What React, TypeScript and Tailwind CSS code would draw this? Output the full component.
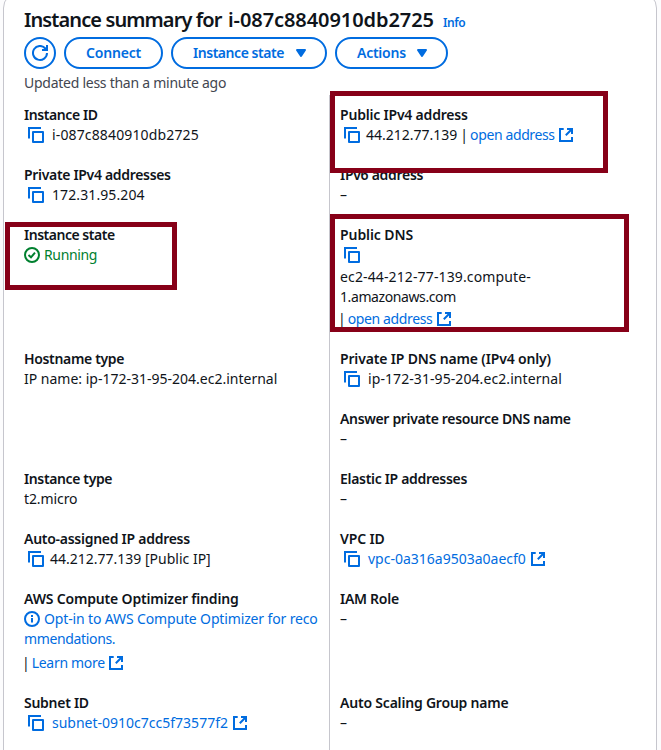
import type { ReactNode } from 'react';

function CopyIcon() {
  return (
    <svg className="ml-1 size-4 shrink-0" viewBox="0 0 16 16" fill="none" stroke="#006ce0" strokeWidth="2">
      <path d="M1 11.5V1h12" />
      <path d="M5 5h10v10H5z" strokeLinejoin="round" />
    </svg>
  );
}

function ExternalIcon({ className = 'ml-1' }: { className?: string }) {
  return (
    <svg className={`size-4 shrink-0 ${className}`} viewBox="0 0 16 16" fill="none" stroke="#006ce0" strokeWidth="2">
      <path d="M5.7 2H2v12h12v-4" />
      <path d="M9 2h5v5M14 2L7.8 8.2" />
    </svg>
  );
}

function CheckIcon() {
  return (
    <svg className="size-4 shrink-0" viewBox="0 0 16 16" fill="none" stroke="#00802f" strokeWidth="2">
      <circle cx="8" cy="8" r="7" />
      <path d="M4.5 8L7 10.3l4-4.6" />
    </svg>
  );
}

function InfoIcon() {
  return (
    <svg className="size-4 shrink-0" viewBox="0 0 16 16" fill="none" stroke="#006ce0" strokeWidth="2">
      <circle cx="8" cy="8" r="7" />
      <path d="M8 11.5V7M8 6V4" />
    </svg>
  );
}

function Caret() {
  return (
    <svg className="size-4 shrink-0" viewBox="0 0 16 16" fill="#006ce0" stroke="#006ce0" strokeWidth="2" strokeLinejoin="round">
      <path d="M4 5h8l-4 6z" />
    </svg>
  );
}

function Field({ label, labelClass = '', children }: { label: string; labelClass?: string; children: ReactNode }) {
  return (
    <div className="py-[10px]">
      <div className={`h-5 w-fit font-semibold ${labelClass}`}>{label}</div>
      {children}
    </div>
  );
}

const row = 'flex h-5 items-center';
const link = 'text-[#006ce0]';

export default function App() {
  return (
    <div className="h-[750px] w-[661px] overflow-hidden bg-[#fcfcfd] font-['Noto_Sans',sans-serif] text-[14px] leading-5 whitespace-nowrap text-[#0f141a]">
      <div className="relative -mt-2 ml-[3px] h-[780px] w-[654px] rounded-2xl border border-[#c6c6cd] bg-white pt-[15px]">
        <header className="pl-5">
          <div className="flex h-6 items-baseline">
            <h1 className="w-[411px] text-[20px] leading-6 font-semibold">
              <span className="inline-block w-[204px] tracking-[-0.9px]">Instance summary for</span>
              <span className="tracking-[-0.07px]">i-087c8840910db2725</span>
            </h1>
            <a className="ml-2 text-[12px] font-semibold tracking-[-0.4px] text-[#006ce0]">Info</a>
          </div>
          <div className="mt-[5px] flex gap-2 font-semibold text-[#006ce0]">
            <button className="flex size-8 items-center justify-center rounded-full border-2 border-[#006ce0]">
              <svg className="size-4" viewBox="0 0 16 16" fill="none" stroke="#006ce0" strokeWidth="2">
                <path d="M15 8a7 7 0 1 1-1.6-4.5L15 5" />
                <path d="M10 5h5V0" />
              </svg>
            </button>
            <button className="flex h-8 w-[99px] items-center justify-center rounded-full border-2 border-[#006ce0] tracking-[-0.2px]">Connect</button>
            <button className="flex h-8 w-[156px] items-center rounded-full border-2 border-[#006ce0] pl-5">
              <span className="w-[100px] text-left tracking-[-0.46px]">Instance state</span>
              <Caret />
            </button>
            <button className="flex h-8 w-[113px] items-center rounded-full border-2 border-[#006ce0] pl-5">
              <span className="w-[57px] text-left tracking-[-0.25px]">Actions</span>
              <Caret />
            </button>
          </div>
          <p className="mt-1 tracking-[-0.26px] text-[#424650]">Updated less than a minute ago</p>
        </header>

        <main className="mt-[2px] grid h-[660px] grid-cols-[325px_1fr]">
          <section className="flex flex-col pl-5">
            <Field label="Instance ID" labelClass="tracking-[-0.42px]"><div className={row}><CopyIcon /><span className="ml-2 tracking-[0.14px]">i-087c8840910db2725</span></div></Field>
            <Field label="Private IPv4 addresses" labelClass="tracking-[-0.32px]"><div className={row}><CopyIcon /><span className="ml-2 tracking-[0.1px]">172.31.95.204</span></div></Field>
            <div className="h-[124px]">
              <Field label="Instance state" labelClass="tracking-[-0.48px]"><div className={row}><CheckIcon /><span className="ml-1 tracking-[-0.35px] text-[#00802f]">Running</span></div></Field>
            </div>
            <div className="h-[120px]">
              <Field label="Hostname type" labelClass="tracking-[-0.34px]"><div className={row}><span>IP name: ip-172-31-95-204.ec2.internal</span></div></Field>
            </div>
            <Field label="Instance type" labelClass="tracking-[-0.37px]"><div className={row}><span className="tracking-[-0.1px]">t2.micro</span></div></Field>
            <Field label="Auto-assigned IP address" labelClass="tracking-[-0.27px]"><div className={row}><CopyIcon /><span className="ml-[6px]">44.212.77.139 [Public IP]</span></div></Field>
            <Field label="AWS Compute Optimizer finding" labelClass="tracking-[-0.18px]">
              <div className={`${row} ${link}`}><InfoIcon /><span className="ml-1 tracking-[-0.14px]">Opt-in to AWS Compute Optimizer for reco</span></div>
              <div className={`${row} ${link}`}><span className="tracking-[-0.35px]">mmendations.</span></div>
              <div className="mt-1 flex h-5 items-center"><span className="-ml-[2px]">|</span><span className="ml-[2px] tracking-[-0.3px] text-[#006ce0]">Learn more</span><ExternalIcon className="ml-[3px]" /></div>
            </Field>
            <Field label="Subnet ID" labelClass="tracking-[-0.27px]"><div className={`${row} ${link}`}><CopyIcon /><span className="ml-2">subnet-0910c7cc5f73577f2</span><ExternalIcon /></div></Field>
          </section>

          <section className="flex flex-col border-l border-[#c6c6cd] pl-[10px]">
            <Field label="Public IPv4 address" labelClass="tracking-[-0.2px]"><div className={row}><CopyIcon /><span className="ml-[6px]">44.212.77.139</span><span className="ml-[3px]">|</span><span className="ml-[2px] tracking-[-0.38px] text-[#006ce0]">open address</span><ExternalIcon className="ml-[3px]" /></div></Field>
            <Field label="IPv6 address" labelClass="tracking-[-0.28px]"><div className={row}>–</div></Field>
            <Field label="Public DNS" labelClass="tracking-[-0.08px]">
              <div className="flex h-[22px] items-start pt-[2px]"><CopyIcon /></div>
              <div className={row}><span className="tracking-[0.13px]">ec2-44-212-77-139.compute-</span></div>
              <div className={row}><span className="tracking-[-0.4px]">1.amazonaws.com</span></div>
              <div className="mt-[2px] flex h-5 items-center"><span className="-ml-[2px]">|</span><span className="ml-[2px] tracking-[-0.38px] text-[#006ce0]">open address</span><ExternalIcon /></div>
            </Field>
            <Field label="Private IP DNS name (IPv4 only)" labelClass="tracking-[-0.16px]"><div className={row}><CopyIcon /><span className="ml-2 tracking-[0.08px]">ip-172-31-95-204.ec2.internal</span></div></Field>
            <Field label="Answer private resource DNS name" labelClass="tracking-[-0.34px]"><div className={row}>–</div></Field>
            <Field label="Elastic IP addresses" labelClass="tracking-[-0.31px]"><div className={row}>–</div></Field>
            <Field label="VPC ID" labelClass="tracking-[-0.12px]"><div className={`${row} ${link}`}><CopyIcon /><span className="ml-2">vpc-0a316a9503a0aecf0</span><ExternalIcon /></div></Field>
            <div className="h-[104px]"><Field label="IAM Role" labelClass="tracking-[-0.28px]"><div className={row}>–</div></Field></div>
            <Field label="Auto Scaling Group name" labelClass="tracking-[-0.2px]"><div className={row}>–</div></Field>
          </section>
        </main>

        {/* Highlight frames drawn over the panel */}
        <div className="absolute top-[98px] left-[326px] h-[82px] w-[278px] border-5 border-[#870018]" />
        <div className="absolute top-[229px] left-[1px] h-[68px] w-[172px] border-5 border-[#870018]" />
        <div className="absolute top-[221px] left-[326px] h-[118px] w-[299px] border-5 border-[#870018]" />
      </div>
    </div>
  );
}
